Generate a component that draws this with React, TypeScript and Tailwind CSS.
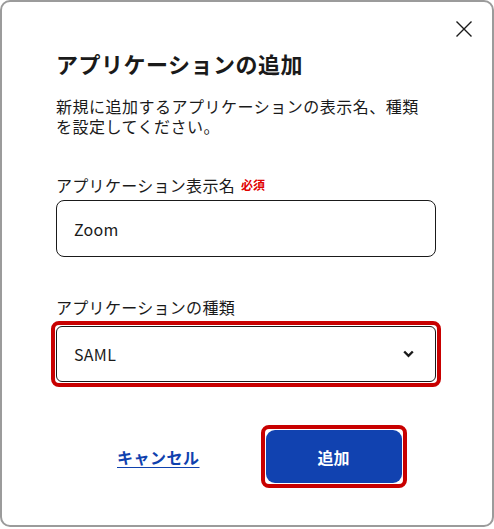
import { useState } from "react";

export default function App() {
  const [name, setName] = useState("Zoom");

  return (
    <div
      className="w-[494px] h-[529px] bg-white"
      style={{ fontFamily: '"Noto Sans CJK JP", "Noto Sans", sans-serif' }}
    >
      <div className="relative h-[527px] w-[494px] rounded-[10px] border-2 border-[#9b9b9b] bg-white px-[54px]">
        {/* Close button */}
        <button
          type="button"
          aria-label="閉じる"
          className="absolute right-[18px] top-[17px] flex h-5 w-5 items-center justify-center"
        >
          <svg width="18" height="18" viewBox="0 0 18 18" fill="none">
            <path d="M1.5 1.5 L16.5 16.5 M16.5 1.5 L1.5 16.5" stroke="#1a1a1a" strokeWidth="1.4" />
          </svg>
        </button>

        <h2 className="pt-[45px] text-[22px] font-bold leading-[32px] tracking-[0.5px] text-[#1a1a1a]">
          アプリケーションの追加
        </h2>

        <p className="mt-[17px] text-[16px] leading-[20px] tracking-[0.5px] text-[#1a1a1a]">
          新規に追加するアプリケーションの表示名、種類
          <br />
          を設定してください。
        </p>

        {/* Display name */}
        <div className="mt-[38px] flex items-center gap-[6px]">
          <span className="text-[16px] leading-[22px] tracking-[0.3px] text-[#1a1a1a]">
            アプリケーション表示名
          </span>
          <span className="text-[12px] font-bold leading-[16px] text-[#e00000]">必須</span>
        </div>
        <input
          type="text"
          value={name}
          onChange={(e) => setName(e.target.value)}
          className="mt-[4px] block h-[57px] w-[380px] rounded-[8px] border border-[#1a1a1a] px-[17px] text-[16px] tracking-[0.3px] text-[#1a1a1a] outline-none"
        />

        {/* Type */}
        <div className="mt-[39px] text-[16px] leading-[22px] tracking-[0.3px] text-[#1a1a1a]">
          アプリケーションの種類
        </div>
        <div className="ml-[-5px] mt-[3px] w-[390px] rounded-[8px] border-[4px] border-[#c80000] p-[1px]">
          <div className="flex h-[56px] items-center justify-between rounded-[6px] border border-[#1a1a1a] pl-[17px] pr-[21px]">
            <span className="text-[16px] tracking-[0.3px] text-[#1a1a1a]">SAML</span>
            <svg width="11" height="8" viewBox="0 0 11 8" fill="none">
              <path d="M1.2 1.5 L5.5 5.8 L9.8 1.5" stroke="#1a1a1a" strokeWidth="2.4" />
            </svg>
          </div>
        </div>

        {/* Actions */}
        <div className="mt-[38px] flex items-center">
          <button
            type="button"
            className="ml-[61px] text-[16px] font-bold tracking-[0.5px] text-[#0f41ae] underline underline-offset-[3px]"
          >
            キャンセル
          </button>
          <div className="ml-[61px] rounded-[8px] border-[4px] border-[#c80000] p-[1px]">
            <button
              type="button"
              className="flex h-[53px] w-[136px] items-center justify-center rounded-[9px] bg-[#1142b0] text-[16px] font-bold text-white"
            >
              追加
            </button>
          </div>
        </div>
      </div>
    </div>
  );
}
